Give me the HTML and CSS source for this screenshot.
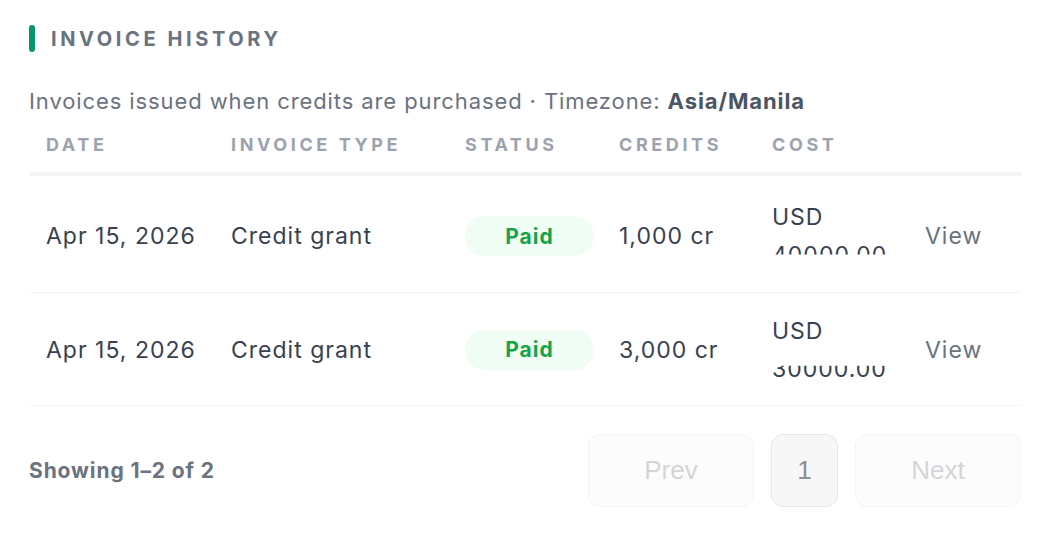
FILE: index.html
```html
<!DOCTYPE html>
<html>
<head>
<meta charset="utf-8">
<link rel="stylesheet" href="styles.css">
</head>
<body>
<section class="panel">
  <h2 class="title"><span class="bar"></span>INVOICE HISTORY</h2>
  <p class="subtitle">Invoices issued when credits are purchased · Timezone: <strong>Asia/Manila</strong></p>
  <div class="table">
    <div class="row head">
      <div class="cell">DATE</div>
      <div class="cell">INVOICE TYPE</div>
      <div class="cell">STATUS</div>
      <div class="cell">CREDITS</div>
      <div class="cell">COST</div>
      <div class="cell"></div>
    </div>
    <div class="row body r1">
      <div class="cell">Apr 15, 2026</div>
      <div class="cell">Credit grant</div>
      <div class="cell"><span class="badge">Paid</span></div>
      <div class="cell">1,000 cr</div>
      <div class="cell cost"><span class="cur">USD</span><span class="amt top">40000.00</span></div>
      <div class="cell view">View</div>
    </div>
    <div class="row body r2">
      <div class="cell">Apr 15, 2026</div>
      <div class="cell">Credit grant</div>
      <div class="cell"><span class="badge">Paid</span></div>
      <div class="cell">3,000 cr</div>
      <div class="cell cost"><span class="cur">USD</span><span class="amt bottom">30000.00</span></div>
      <div class="cell view">View</div>
    </div>
  </div>
  <div class="footer">
    <span class="count">Showing 1–2 of 2</span>
    <div class="pager">
      <button class="pbtn nav" disabled>Prev</button>
      <button class="pbtn page">1</button>
      <button class="pbtn nav" disabled>Next</button>
    </div>
  </div>
</section>
</body>
</html>
```

FILE: styles.css
```css
* { box-sizing: border-box; }
html, body { margin: 0; background: #ffffff; }
body { font-family: Inter, "Noto Sans", sans-serif; color: #374151; }

.panel {
  width: 1042px;
  padding: 25px 21px 0 29px;
}

.title {
  display: flex;
  align-items: center;
  gap: 16px;
  margin: 0;
  height: 27px;
  font-size: 20px;
  font-weight: 700;
  letter-spacing: 0.18em;
  color: #6b7280;
}
.bar {
  width: 6px;
  height: 27px;
  border-radius: 3px;
  background: #059669;
}

.subtitle {
  margin: 34px 0 0 0;
  font-size: 22px;
  line-height: 30px;
  letter-spacing: 0.9px;
  color: #6b7280;
}
.subtitle strong { color: #4b5563; font-weight: 700; }

.table { display: flex; flex-direction: column; }
.row {
  display: grid;
  grid-template-columns: 185px 234px 154px 153px 153px 1fr;
  align-items: center;
}
.cell { padding: 0 17px; }

.head {
  height: 60px;
  border-bottom: 4px solid #f3f4f6;
  font-size: 18px;
  font-weight: 700;
  letter-spacing: 0.2em;
  color: #9ca3af;
}
.body {
  border-bottom: 1px solid #f3f4f6;
  font-size: 23px;
  letter-spacing: 1px;
  color: #374151;
}
.r1 { height: 117px; padding-top: 4px; }
.r2 { height: 113px; padding-top: 1px; }

.badge {
  display: inline-flex;
  align-items: center;
  justify-content: center;
  width: 129px;
  height: 40px;
  border-radius: 20px;
  background: #f0fdf4;
  color: #16a34a;
  font-size: 21px;
  font-weight: 700;
  letter-spacing: 1px;
}

.cost {
  display: flex;
  flex-direction: column;
  line-height: 28px;
}
.amt { display: block; margin-top: 10px; }
.amt.top { clip-path: inset(0 0 52% 0); }
.amt.bottom { clip-path: inset(40% 0 0 0); }

.view { color: #6b7280; }

.footer {
  display: flex;
  align-items: center;
  justify-content: space-between;
  margin-top: 28px;
}
.count {
  font-size: 21px;
  font-weight: 700;
  letter-spacing: 0.9px;
  color: #6b7280;
}
.pager { display: flex; gap: 17px; }
.pbtn {
  height: 73px;
  border-radius: 12px;
  font-family: "Liberation Sans", Arial, sans-serif;
  font-size: 26px;
}
.nav {
  width: 166px;
  background: #fcfcfc;
  border: 1.5px solid #f3f4f6;
  color: #d4d4d8;
}
.page {
  width: 67px;
  background: #f7f7f8;
  border: 1.5px solid #e5e7eb;
  color: #8e8e93;
}
```
